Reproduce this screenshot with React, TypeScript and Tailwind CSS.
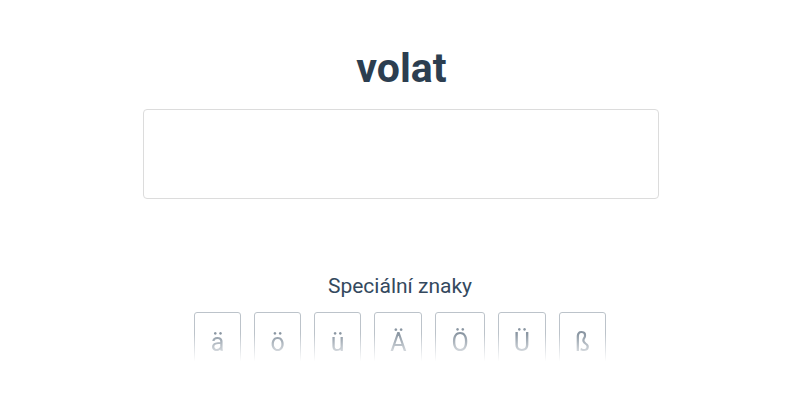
const chars = ['ä', 'ö', 'ü', 'Ä', 'Ö', 'Ü', 'ß']

export default function App() {
  return (
    <div className="min-h-[400px] bg-white flex flex-col items-center font-['Roboto',sans-serif]">
      <h1 className="mt-[44px] ml-[3px] text-[41px] leading-[48px] font-bold text-[#2c3e50]">volat</h1>

      <textarea
        className="mt-[17px] ml-[2px] w-[516px] h-[90px] border border-[#dcdcdc] rounded-[4px] resize-none outline-none p-3"
      />

      <p className="mt-[73px] text-[21px] leading-[28px] text-[#34495e]">Speciální znaky</p>

      <div className="mt-[12px] flex gap-[13px] [mask-image:linear-gradient(to_bottom,black_35%,transparent_80%)]">
        {chars.map((c) => (
          <button
            key={c}
            className="min-w-[47px] border border-[#bcc3ca] rounded-[3px] px-[15px] py-3 text-[25px] leading-9 text-[#8a96a2] bg-white"
          >
            {c}
          </button>
        ))}
      </div>
    </div>
  )
}
